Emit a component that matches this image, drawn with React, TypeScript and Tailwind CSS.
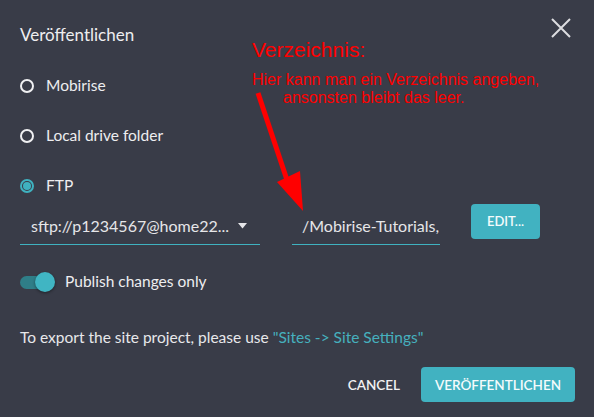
import React from "react";

function Radio({ checked, label }: { checked?: boolean; label: string }) {
  return (
    <div className="flex items-center h-[24px] gap-[12px]">
      {checked ? (
        <span className="w-[14px] h-[14px] rounded-full border-[2px] border-[#3fb2c0] flex items-center justify-center">
          <span className="w-[8px] h-[8px] rounded-full bg-[#3fb2c0]" />
        </span>
      ) : (
        <span className="w-[14px] h-[14px] rounded-full border-[2px] border-[#f0f0f2]" />
      )}
      <span className="text-[15.5px] text-[#eeeef0]">{label}</span>
    </div>
  );
}

export default function App() {
  return (
    <div
      className="relative w-[594px] h-[417px] bg-[#393c48] overflow-hidden"
      style={{ fontFamily: "Lato, 'Open Sans', sans-serif" }}
    >
      <div className="flex flex-col pl-[20px] pr-[19px]">
        <div className="flex items-center justify-between h-[34px] mt-[17px]">
          <span className="text-[17px] text-[#eeeef0] leading-none">Veröffentlichen</span>
          <svg width="22" height="22" viewBox="0 0 22 22" className="mr-[3px] -mt-[12px]">
            <path d="M2 2 L20 20 M20 2 L2 20" stroke="#dcdde0" strokeWidth="2" />
          </svg>
        </div>
        <div className="mt-[23px] flex flex-col gap-[26px]">
          <Radio label="Mobirise" />
          <Radio label="Local drive folder" />
          <Radio checked label="FTP" />
        </div>
        <div className="flex items-end mt-[9px] h-[38px]">
          <div className="w-[240px] h-[38px] border-b border-[#3fb2c0] flex items-center pl-[11px] pr-[13px] justify-between">
            <span className="text-[16px] text-[#e6e6e9]">sftp://p1234567@home22...</span>
            <svg width="9" height="6" viewBox="0 0 9 6">
              <path d="M0 0 L9 0 L4.5 5.5 Z" fill="#e6e6e9" />
            </svg>
          </div>
          <div className="ml-[32px] w-[148px] h-[38px] border-b border-[#3fb2c0] flex items-center pl-[10px] overflow-hidden whitespace-nowrap">
            <span className="text-[16px] text-[#e6e6e9]">/Mobirise-Tutorials,</span>
          </div>
          <button className="ml-[31px] self-start mt-[-3px] w-[69px] h-[35px] rounded-[4px] bg-[#41b2c1] text-[13px] font-semibold text-[#f4fbfc]">
            EDIT...
          </button>
        </div>
        <div className="flex items-center mt-[25px] h-[24px]">
          <div className="relative w-[36px] h-[22px]">
            <div className="absolute left-0 top-[5px] w-[30px] h-[13px] rounded-full bg-[#2f7e88]" />
            <div className="absolute left-[15px] top-[1px] w-[20px] h-[20px] rounded-full bg-[#40b5c3] shadow-[0_1px_3px_rgba(0,0,0,0.45)]" />
          </div>
          <span className="ml-[9px] text-[15.5px] text-[#eeeef0]">Publish changes only</span>
        </div>
        <div className="mt-[32px] text-[15.5px] text-[#e8e8eb]">
          To export the site project, please use <span className="text-[#46b0be]">"Sites -&gt; Site Settings"</span>
        </div>
        <div className="flex items-center justify-end mt-[18px] gap-[21px] pr-0">
          <span className="text-[13.5px] font-semibold text-[#f1f1f3]">CANCEL</span>
          <button className="w-[154px] h-[35px] rounded-[4px] bg-[#41b2c1] text-[13.5px] font-semibold text-[#f4fbfc]">
            VERÖFFENTLICHEN
          </button>
        </div>
      </div>

      <div
        className="absolute left-[252px] top-[39px] text-[#ff0000] leading-none"
        style={{ fontFamily: "'Liberation Sans', Arial, sans-serif" }}
      >
        <div className="text-[21px]">Verzeichnis:</div>
        <div className="text-[16px] mt-[12px]">Hier kann man ein Verzeichnis angeben,</div>
        <div className="text-[16px] mt-[2px] ml-[31px]">ansonsten bleibt das leer.</div>
      </div>
      <svg className="absolute left-0 top-0" width="594" height="417" viewBox="0 0 594 417">
        <path d="M258 93 L287 180" stroke="#ff0000" strokeWidth="5" />
        <path d="M277 182 L300 171 L303 211 Z" fill="#ff0000" />
      </svg>
    </div>
  );
}
